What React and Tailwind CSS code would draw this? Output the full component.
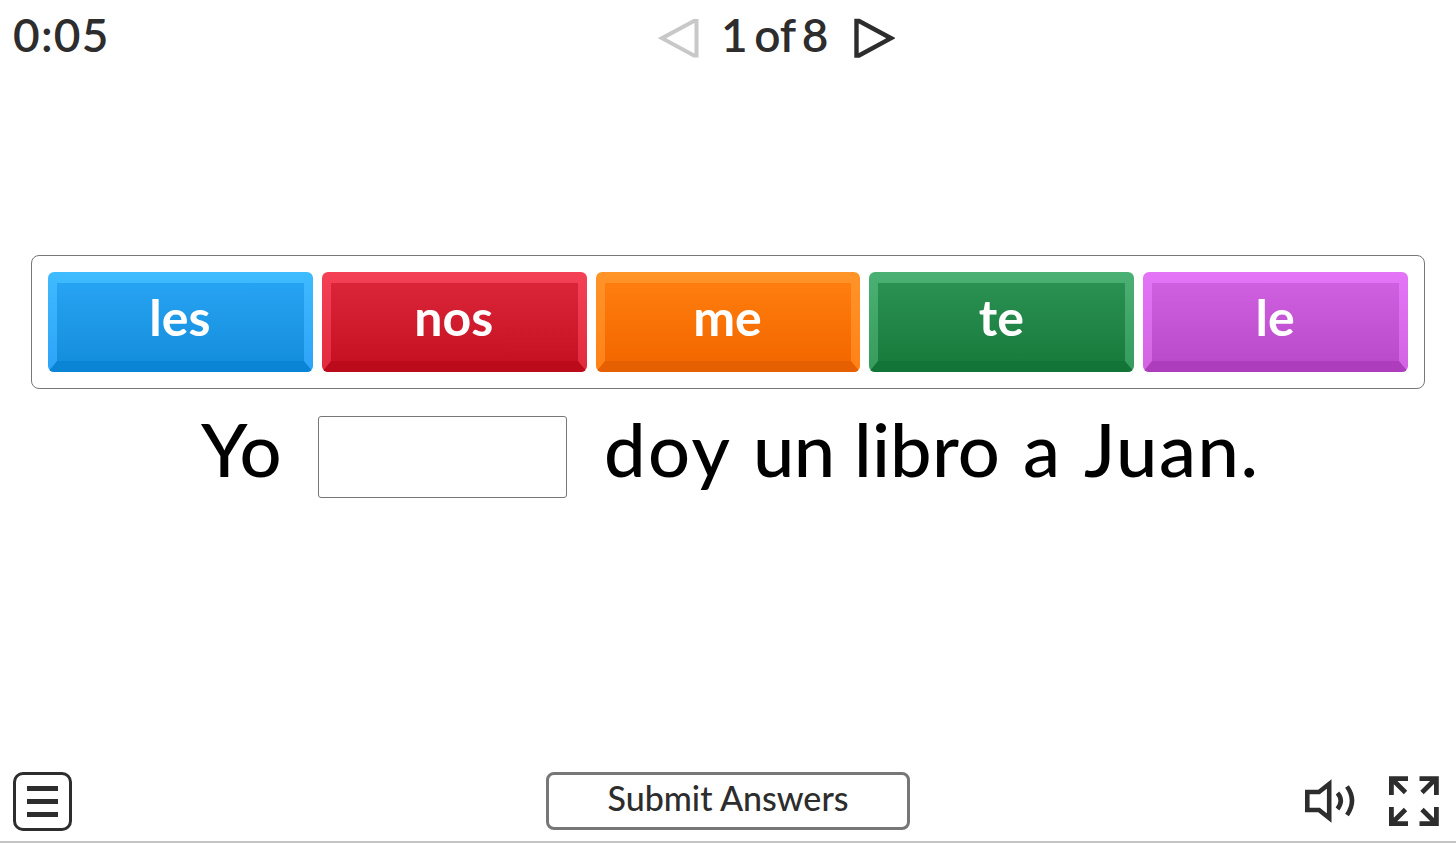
const tiles = [
  {
    word: "les",
    edge: "from-[#3fbbff] to-[#2da3f8]",
    face: "from-[#27a3f3] to-[#148fdd] border-b-[#0a84d4]",
  },
  {
    word: "nos",
    edge: "from-[#f54156] to-[#e02a3e]",
    face: "from-[#da2538] to-[#c61122] border-b-[#bb0b1b]",
  },
  {
    word: "me",
    edge: "from-[#ff9429] to-[#ff8115]",
    face: "from-[#ff7d0e] to-[#f36800] border-b-[#e65f00]",
  },
  {
    word: "te",
    edge: "from-[#4bb073] to-[#359c5d]",
    face: "from-[#2a9152] to-[#187c3d] border-b-[#127436]",
  },
  {
    word: "le",
    edge: "from-[#e475f6] to-[#d263e3]",
    face: "from-[#cf60df] to-[#ba4bca] border-b-[#ad3dbd]",
  },
];

// the face sits inside the lighter edge; its bottom border makes the mitred shadow
function Tile({ word, edge, face }) {
  return (
    <button
      className={`flex h-[100px] flex-1 overflow-hidden rounded-[6px] bg-linear-to-b ${edge}`}
    >
      <span
        className={`flex h-full w-full items-center justify-center border-x-[9px] border-y-[11px] border-transparent bg-linear-to-b bg-clip-padding pr-[1px] pb-[11px] text-[50px] leading-none font-bold text-white ${face}`}
      >
        {word}
      </span>
    </button>
  );
}

function Header() {
  return (
    <header className="grid h-[72px] grid-cols-[658px_1fr] items-start">
      <div className="pt-[7px] pl-[13px] text-[46px] leading-[56px] font-semibold tracking-[1.2px]">
        0:05
      </div>
      <div className="flex">
        <button aria-label="Previous" className="mt-[18px] h-[40px] w-[41px]">
          <svg width="41" height="40" viewBox="0 0 41 40" fill="none">
            <path d="M38.5 3V37.5H36L4 20.2L36 3Z" stroke="#c8c8c8" strokeWidth="4" />
          </svg>
        </button>
        <div className="w-[155px] pt-[7px] pl-[22px] text-[46px] leading-[56px] font-semibold [word-spacing:-5px] whitespace-nowrap">
          1 of 8
        </div>
        <button aria-label="Next" className="mt-[18px] h-[40px] w-[41px]">
          <svg width="41" height="40" viewBox="0 0 41 40" fill="none">
            <path d="M2.5 3V37.5H5L37 20.2L5 3Z" stroke="#2d2d2d" strokeWidth="4.4" />
          </svg>
        </button>
      </div>
    </header>
  );
}

function Sentence() {
  return (
    <div className="mt-[27px] flex h-[83px] items-start text-[74px] leading-[66px] font-medium whitespace-nowrap text-black">
      <span className="w-[318px] pl-[201px]">Yo</span>
      <span className="h-[82px] w-[249px] rounded-[3px] border border-[#777] bg-white" />
      <span className="w-[186px] pl-[37px] tracking-[2.5px]">doy</span>
      <span className="w-[101px] tracking-[-0.5px]">un</span>
      <span className="w-[169px] tracking-[0.2px]">libro</span>
      <span className="w-[61px]">a</span>
      <span className="tracking-[1.6px]">Juan.</span>
    </div>
  );
}

function Footer() {
  return (
    <footer className="mt-auto flex h-[72px] items-start border-b-2 border-[#c4c4c4] pl-[13px]">
      <button
        aria-label="Menu"
        className="mt-[1px] flex h-[59px] w-[59px] flex-col items-center justify-center gap-[8px] rounded-[10px] border-[3px] border-[#2d2d2d]"
      >
        <span className="h-[5px] w-[31px] bg-[#2d2d2d]" />
        <span className="h-[5px] w-[31px] bg-[#2d2d2d]" />
        <span className="h-[5px] w-[31px] bg-[#2d2d2d]" />
      </button>
      <button className="mt-[1px] ml-[474px] flex h-[58px] w-[364px] items-center justify-center rounded-[8px] border-[3px] border-[#777] pb-[8px] text-[34px] font-medium">
        Submit Answers
      </button>
      <button aria-label="Sound" className="mt-[6px] ml-[394px]">
        <svg width="54" height="46" viewBox="0 0 54 46" fill="none" stroke="#2d2d2d">
          <path d="M3.3 15H15L25.2 7V41L15 33H3.3Z" strokeWidth="4.6" />
          <path d="M33.5 16Q40 23.5 33.5 32" strokeWidth="4.6" />
          <path d="M43 9.5Q53 23.5 43 38" strokeWidth="4.6" />
        </svg>
      </button>
      <button aria-label="Fullscreen" className="mt-[4px] ml-[30px]">
        <svg width="52" height="52" viewBox="0 0 52 52" fill="none" stroke="#2d2d2d" strokeWidth="4.8">
          <path d="M3.4 20V3.6H20M4 4L17.5 17.5" />
          <path d="M31.5 3.6H48.4V20M47.5 4L34 17.5" />
          <path d="M3.4 32V48.6H20M4 48L17.5 34.5" />
          <path d="M31.5 48.6H48.4V32M47.5 48L34 34.5" />
        </svg>
      </button>
    </footer>
  );
}

export default function App() {
  return (
    <div className="flex h-[843px] w-[1456px] flex-col overflow-hidden bg-white font-['Lato',sans-serif] text-[#2d2d2d]">
      <Header />
      <div className="mx-[31px] mt-[183px] flex h-[134px] shrink-0 gap-[9px] rounded-[8px] border border-[#777] px-[16px] pt-[16px]">
        {tiles.map((tile) => (
          <Tile key={tile.word} {...tile} />
        ))}
      </div>
      <Sentence />
      <Footer />
    </div>
  );
}
